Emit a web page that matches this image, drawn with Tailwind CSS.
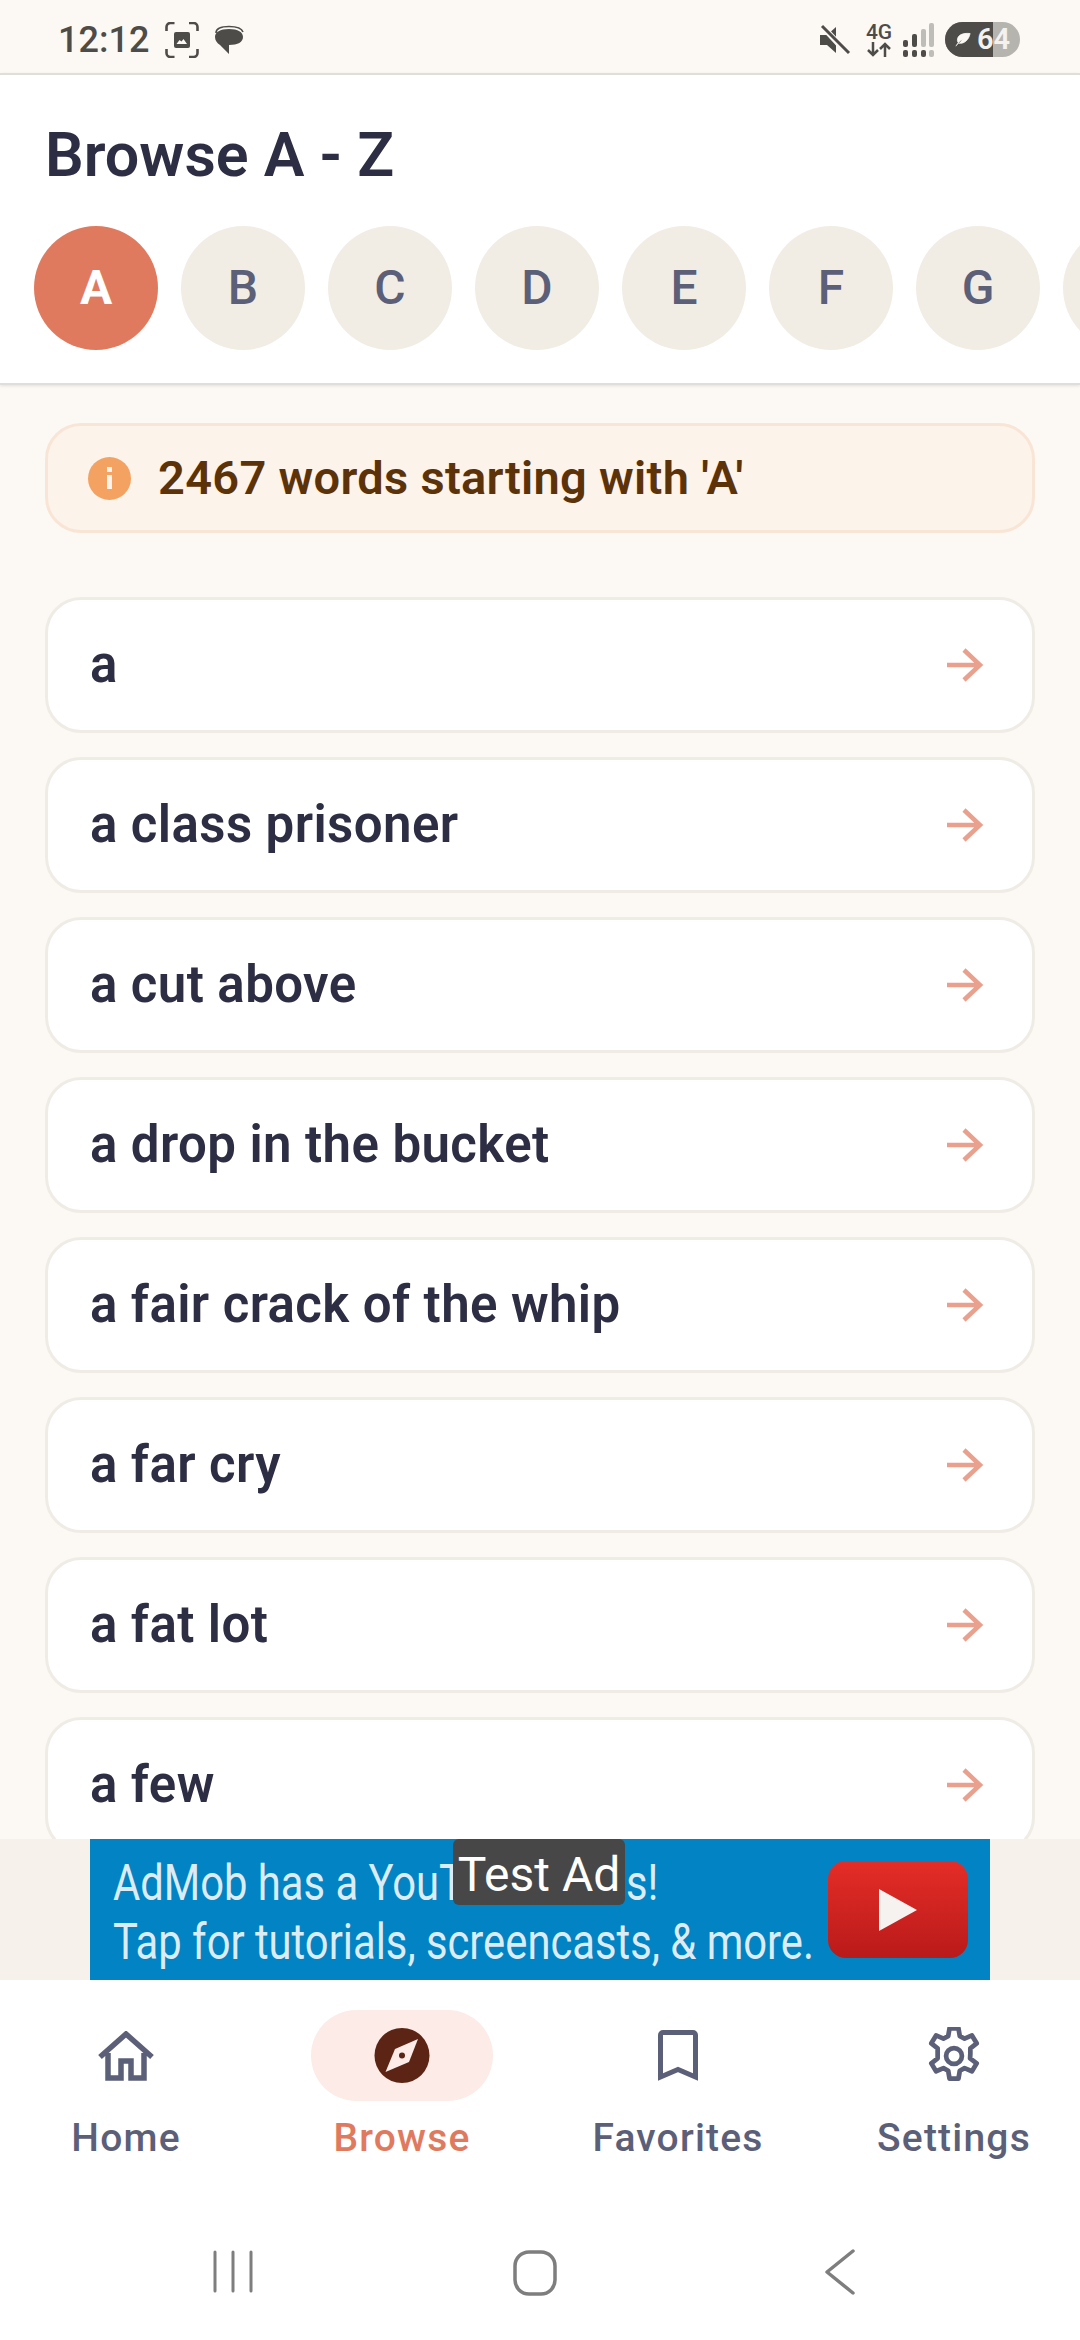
<!DOCTYPE html>
<html lang="en">
<head>
<meta charset="UTF-8">
<title>Browse A - Z</title>
<script src="https://cdn.jsdelivr.net/npm/@tailwindcss/browser@4"></script>
</head>
<body class="bg-[#fcf9f5] font-['Roboto',sans-serif]">
<div class="w-[1080px] h-[2340px] flex flex-col overflow-hidden">
  <!-- Status bar -->
  <div class="h-[73px] shrink-0 flex items-center justify-between pl-[58px] pr-[60px] pt-[6px] text-[#4e4c49]">
    <div class="flex items-center">
      <span class="text-[36px] font-medium leading-none">12:12</span>
      <svg class="ml-[16px]" width="34" height="36" viewBox="0 0 34 36" fill="none" stroke="currentColor" stroke-width="2.6"><path d="M1.5 9V5a4 4 0 0 1 4-4h4M24 1h4.500a4 4 0 0 1 4 4v4M32.500 27v4a4 4 0 0 1-4 4H24M9.500 35h-4a4 4 0 0 1-4-4v-4"/><rect x="9" y="10" width="16" height="16" rx="2" fill="currentColor" stroke="none"/><path d="M11.500 22l3-4 2 1.500 2-2.500 3.500 5z" fill="#fcf9f5" stroke="none"/></svg>
      <svg class="ml-[14px]" width="32" height="32" viewBox="0 0 32 32"><path d="M3 10C3 6 7 3.500 16 3.500S29 6 30 9" fill="none" stroke="currentColor" stroke-width="1.600" transform="translate(0 -1)"/><path d="M16 5c9 0 14 3 14 8s-5 8-14 8l0 9-9-9c-3-2-5-4.500-5-8 0-5 5-8 14-8z" fill="currentColor"/></svg>
    </div>
    <div class="flex items-center">
      <svg width="32" height="34" viewBox="0 0 32 34"><path d="M1 12h7l9-8v26l-9-8H1z" fill="currentColor"/><path d="M3 3l26 28" stroke="#fcf9f5" stroke-width="6"/><path d="M3 3l27 27" stroke="currentColor" stroke-width="3"/></svg>
      <div class="ml-[12px] w-[32px] flex flex-col items-center">
        <span class="text-[21px] leading-[20px] font-medium">4G</span>
        <svg width="24" height="15" viewBox="0 0 24 15" fill="none" stroke="currentColor" stroke-width="2.500"><path d="M6 0v13M1 8l5 5 5-5M18 15V2M13 7l5-5 5 5"/></svg>
      </div>
      <svg class="ml-[7px]" width="32" height="34" viewBox="0 0 32 34" fill="currentColor"><rect x="1" y="17" width="5" height="7" rx="2"/><rect x="10" y="11" width="5" height="13" rx="2"/><rect x="19" y="6" width="5" height="18" rx="2" opacity=".35"/><rect x="27" y="0" width="5" height="24" rx="2" opacity=".35"/><rect x="1" y="27" width="5" height="7" rx="2"/><rect x="10" y="27" width="5" height="7" rx="2"/><rect x="19" y="27" width="5" height="7" rx="2"/><rect x="27" y="27" width="5" height="7" rx="2" opacity=".35"/></svg>
      <div class="relative ml-[11px] w-[75px] h-[35px] rounded-full overflow-hidden bg-[#b6b4af] flex items-center">
        <div class="absolute left-0 top-0 bottom-0 w-[48px] bg-[#4e4c49]"></div>
        <svg class="relative ml-[9px]" width="18" height="15" viewBox="0 0 21 20"><path d="M20 2C10 1 3 4 3 11c0 2 1 3 2 4 7 1 13-4 15-13zM1 19c2-4 5-7 9-9" fill="#fcf9f5" stroke="#fcf9f5" stroke-width="1"/></svg>
        <span class="relative ml-[5px] text-[#f4f2ef] text-[29px] leading-none font-semibold">64</span>
      </div>
    </div>
  </div>

  <!-- Header -->
  <div class="h-[312px] shrink-0 bg-white border-y-2 border-[#e0dedb] shadow-[0_1px_3px_rgba(0,0,0,0.1)] overflow-hidden relative z-10">
    <h1 class="pl-[45px] pt-[49px] text-[61px] leading-[62px] font-semibold text-[#2d2d44]">Browse A - Z</h1>
    <div class="mt-[40px] pl-[34px] flex gap-[23px] text-[48px] font-medium text-[#5c5f78]">
      <div class="w-[124px] h-[124px] shrink-0 rounded-full bg-[#e07a5f] text-white font-bold flex items-center justify-center">A</div>
      <div class="w-[124px] h-[124px] shrink-0 rounded-full bg-[#f1ede5] flex items-center justify-center">B</div>
      <div class="w-[124px] h-[124px] shrink-0 rounded-full bg-[#f1ede5] flex items-center justify-center">C</div>
      <div class="w-[124px] h-[124px] shrink-0 rounded-full bg-[#f1ede5] flex items-center justify-center">D</div>
      <div class="w-[124px] h-[124px] shrink-0 rounded-full bg-[#f1ede5] flex items-center justify-center">E</div>
      <div class="w-[124px] h-[124px] shrink-0 rounded-full bg-[#f1ede5] flex items-center justify-center">F</div>
      <div class="w-[124px] h-[124px] shrink-0 rounded-full bg-[#f1ede5] flex items-center justify-center">G</div>
      <div class="w-[124px] h-[124px] shrink-0 rounded-full bg-[#f1ede5]"></div>
    </div>
  </div>

  <!-- Word list -->
  <div class="h-[1454px] shrink-0 overflow-hidden px-[45px] pt-[38px]">
    <div class="h-[110px] rounded-[36px] border-[3px] border-[#f9e5d6] bg-[#fcf3eb] flex items-center pl-[40px]">
      <div class="relative w-[43px] h-[43px] rounded-full bg-[#f4a261] flex flex-col items-center justify-center gap-[3px]">
        <div class="w-[5px] h-[5px] bg-[#fcf3eb]"></div>
        <div class="w-[5px] h-[14px] bg-[#fcf3eb]"></div>
      </div>
      <span class="ml-[27px] text-[47px] font-semibold text-[#5c3208] tracking-[0.3px]">2467 words starting with 'A'</span>
    </div>
    <div class="mt-[64px] flex flex-col gap-[24px]">
      <div class="h-[136px] shrink-0 rounded-[36px] border-[3px] border-[#efebe5] bg-white flex items-center justify-between pl-[42px] pr-[48px]"><span class="text-[51px] font-semibold tracking-[0.4px] text-[#2d2d44]">a</span><svg width="38" height="34" viewBox="0 0 38 34" fill="none" stroke="#e9a18e" stroke-width="4.500"><path d="M1 17h34M18 2l16 15-16 15"/></svg></div>
      <div class="h-[136px] shrink-0 rounded-[36px] border-[3px] border-[#efebe5] bg-white flex items-center justify-between pl-[42px] pr-[48px]"><span class="text-[51px] font-semibold tracking-[0.4px] text-[#2d2d44]">a class prisoner</span><svg width="38" height="34" viewBox="0 0 38 34" fill="none" stroke="#e9a18e" stroke-width="4.500"><path d="M1 17h34M18 2l16 15-16 15"/></svg></div>
      <div class="h-[136px] shrink-0 rounded-[36px] border-[3px] border-[#efebe5] bg-white flex items-center justify-between pl-[42px] pr-[48px]"><span class="text-[51px] font-semibold tracking-[0.4px] text-[#2d2d44]">a cut above</span><svg width="38" height="34" viewBox="0 0 38 34" fill="none" stroke="#e9a18e" stroke-width="4.500"><path d="M1 17h34M18 2l16 15-16 15"/></svg></div>
      <div class="h-[136px] shrink-0 rounded-[36px] border-[3px] border-[#efebe5] bg-white flex items-center justify-between pl-[42px] pr-[48px]"><span class="text-[51px] font-semibold tracking-[0.4px] text-[#2d2d44]">a drop in the bucket</span><svg width="38" height="34" viewBox="0 0 38 34" fill="none" stroke="#e9a18e" stroke-width="4.500"><path d="M1 17h34M18 2l16 15-16 15"/></svg></div>
      <div class="h-[136px] shrink-0 rounded-[36px] border-[3px] border-[#efebe5] bg-white flex items-center justify-between pl-[42px] pr-[48px]"><span class="text-[51px] font-semibold tracking-[0.4px] text-[#2d2d44]">a fair crack of the whip</span><svg width="38" height="34" viewBox="0 0 38 34" fill="none" stroke="#e9a18e" stroke-width="4.500"><path d="M1 17h34M18 2l16 15-16 15"/></svg></div>
      <div class="h-[136px] shrink-0 rounded-[36px] border-[3px] border-[#efebe5] bg-white flex items-center justify-between pl-[42px] pr-[48px]"><span class="text-[51px] font-semibold tracking-[0.4px] text-[#2d2d44]">a far cry</span><svg width="38" height="34" viewBox="0 0 38 34" fill="none" stroke="#e9a18e" stroke-width="4.500"><path d="M1 17h34M18 2l16 15-16 15"/></svg></div>
      <div class="h-[136px] shrink-0 rounded-[36px] border-[3px] border-[#efebe5] bg-white flex items-center justify-between pl-[42px] pr-[48px]"><span class="text-[51px] font-semibold tracking-[0.4px] text-[#2d2d44]">a fat lot</span><svg width="38" height="34" viewBox="0 0 38 34" fill="none" stroke="#e9a18e" stroke-width="4.500"><path d="M1 17h34M18 2l16 15-16 15"/></svg></div>
      <div class="h-[136px] shrink-0 rounded-[36px] border-[3px] border-[#efebe5] bg-white flex items-center justify-between pl-[42px] pr-[48px]"><span class="text-[51px] font-semibold tracking-[0.4px] text-[#2d2d44]">a few</span><svg width="38" height="34" viewBox="0 0 38 34" fill="none" stroke="#e9a18e" stroke-width="4.500"><path d="M1 17h34M18 2l16 15-16 15"/></svg></div>
    </div>
  </div>

  <!-- Ad banner -->
  <div class="h-[141px] shrink-0 bg-[#f6f2eb] flex justify-center">
    <div class="relative w-[900px] h-[141px] bg-[#0283c4] overflow-hidden text-[#dcecf5]">
      <div class="absolute left-[23px] top-[15px] text-[50px] leading-[58px] whitespace-nowrap origin-top-left scale-x-[0.835]">AdMob has a YouT</div>
      <div class="absolute left-[536px] top-[15px] text-[50px] leading-[58px] whitespace-nowrap origin-top-left scale-x-[0.835]">s!</div>
      <div class="absolute left-[23px] top-[74px] text-[50px] leading-[58px] whitespace-nowrap origin-top-left scale-x-[0.835]">Tap for tutorials, screencasts, &amp; more.</div>
      <div class="absolute left-[363px] top-0 w-[172px] h-[66px] rounded-[6px] bg-[#474747] text-white text-[48px] leading-[72px] text-center whitespace-nowrap">Test Ad</div>
      <div class="absolute left-[738px] top-[22px] w-[140px] h-[97px] rounded-[18px] bg-gradient-to-b from-[#e52d27] to-[#b91a1a] flex items-center justify-center">
        <svg width="38" height="42" viewBox="0 0 38 42"><path d="M0 0l38 21L0 42z" fill="#f6f2f0"/></svg>
      </div>
    </div>
  </div>

  <!-- Bottom nav -->
  <div class="h-[240px] shrink-0 bg-white grid grid-cols-[repeat(4,240px)] gap-x-[36px] pl-[6px] pt-[30px] text-[39px] font-medium text-[#5c5f78] tracking-[1.2px] text-center">
    <div class="flex flex-col items-center">
      <div class="h-[91px] flex items-center"><svg width="56" height="50" viewBox="0 0 56 50" fill="none" stroke="#5c5f78" stroke-width="5.500"><path d="M2 26L28 3l26 23M10 22v25h13V30h10v17h13V22"/></svg></div>
      <span class="mt-[14px] leading-[46px]">Home</span>
    </div>
    <div class="flex flex-col items-center">
      <div class="w-[182px] h-[91px] rounded-full bg-[#fcebe6] flex items-center justify-center">
        <svg width="56" height="57" viewBox="0 0 56 57"><circle cx="28" cy="28.500" r="27.500" fill="#5c2415"/><path d="M44 12L35 35 11.500 45 21 22z" fill="#fcebe6"/><circle cx="28" cy="28.500" r="3" fill="#5c2415"/></svg>
      </div>
      <span class="mt-[14px] leading-[46px] text-[#e07a5f]">Browse</span>
    </div>
    <div class="flex flex-col items-center">
      <div class="h-[91px] flex items-center"><svg width="40" height="52" viewBox="0 0 40 52" fill="none" stroke="#5c5f78" stroke-width="5"><path d="M2.500 47V5a2.500 2.500 0 0 1 2.500-2.500h30A2.500 2.500 0 0 1 37.500 5v42L20 39.500z"/></svg></div>
      <span class="mt-[14px] leading-[46px]">Favorites</span>
    </div>
    <div class="flex flex-col items-center">
      <div class="h-[91px] flex items-center"><svg width="56" height="58" viewBox="2.400 1 19.200 22" fill="none" stroke="#5c5f78" stroke-width="1.800"><path d="M10.300 1.500h3.400l.5 3 1.800.9 2.800-1.200 1.800 3-2.400 1.900v2l-.1 1.800 2.500 1.900-1.800 3-2.800-1.200-1.800 1-.5 3h-3.400l-.5-3-1.800-1-2.800 1.200-1.800-3 2.400-1.900v-3.800L3.400 7.200l1.800-3L8 5.400l1.800-.9z" stroke-linejoin="round"/><circle cx="12" cy="12" r="3"/></svg></div>
      <span class="mt-[14px] leading-[46px]">Settings</span>
    </div>
  </div>

  <!-- System nav -->
  <div class="h-[120px] shrink-0 bg-white relative">
    <svg class="absolute left-[210px] top-[29px]" width="46" height="46" viewBox="0 0 46 46" stroke="#7e7e7e" stroke-width="3" stroke-linecap="round"><path d="M5 3v39M23 3v39M41 3v39"/></svg>
    <svg class="absolute left-[511px] top-[28px]" width="48" height="50" viewBox="0 0 48 50" fill="none" stroke="#7e7e7e" stroke-width="3.500"><rect x="4" y="4" width="40" height="42" rx="14"/></svg>
    <svg class="absolute left-[824px] top-[28px]" width="36" height="48" viewBox="0 0 36 48" fill="none" stroke="#7e7e7e" stroke-width="3.500" stroke-linecap="round" stroke-linejoin="round"><path d="M29 3L3 24l26 21"/></svg>
  </div>
</div>
</body>
</html>
